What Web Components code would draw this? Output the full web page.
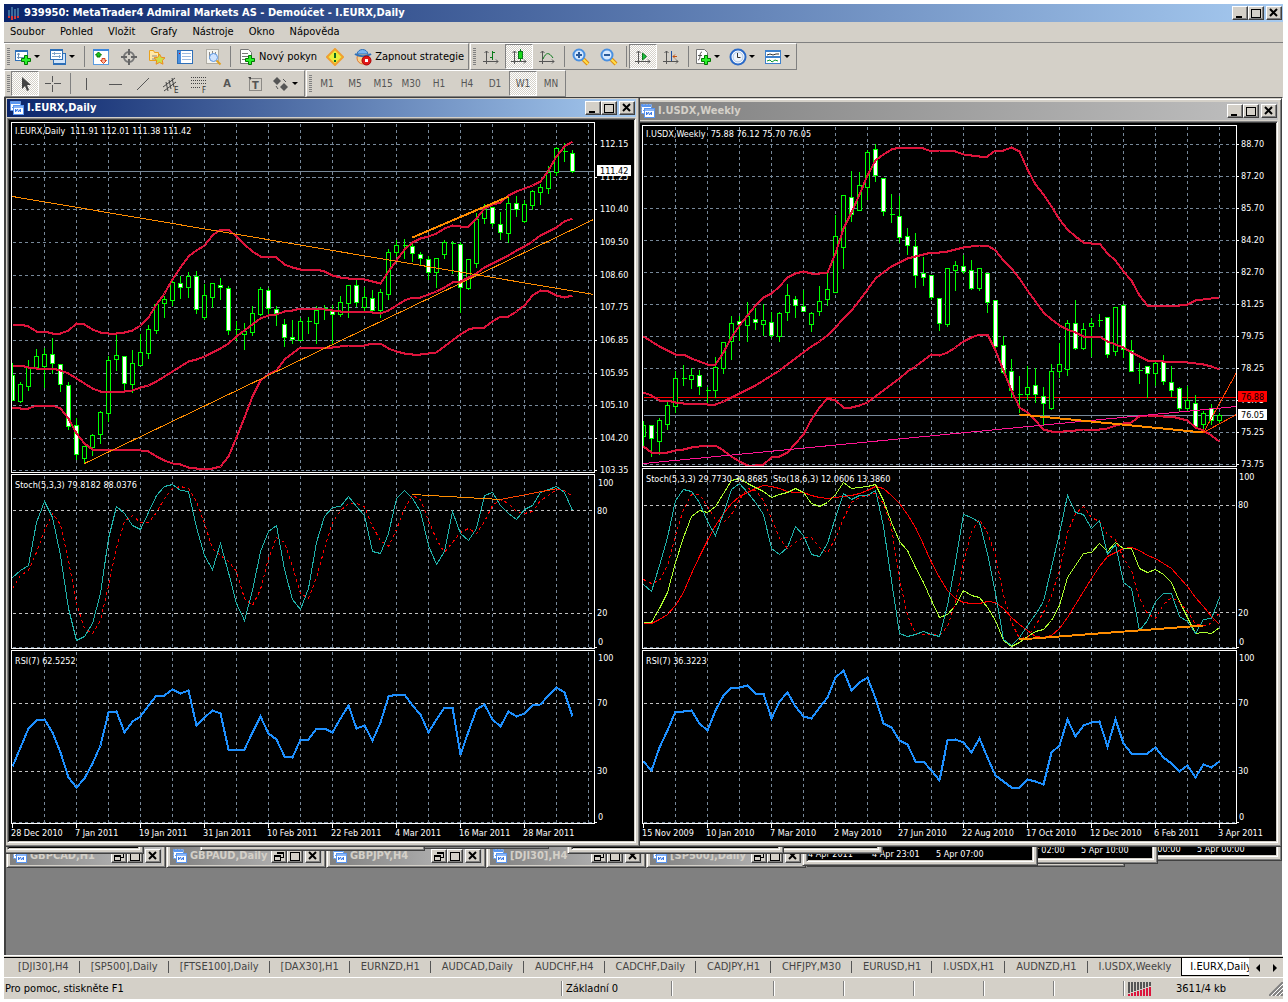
<!DOCTYPE html>
<html lang="cs">
<head>
<meta charset="utf-8">
<title>939950: MetaTrader4 Admiral Markets AS - Demoúčet - I.EURX,Daily</title>
<style>
    :root {
        --face: #d4d0c8;
        --shadow: #808080;
        --dark: #404040;
        --light: #ffffff;
    }

    body {
        margin: 0;
        background: #fff;
        font: 11px/14px "DejaVu Sans Condensed", "DejaVu Sans", sans-serif;
        color: #000;
    }
</style>
</head>
<body>
<terminal-app></terminal-app>

<script>
/* ---------- icons ---------- */

const svg = (body, w = 18, h = 18) =>
    `<svg width="${w}" height="${h}" viewBox="0 0 ${w} ${h}" fill="none" aria-hidden="true">${body}</svg>`;

const plus = (x, y) =>
    `<path d="M${x + 3}.5 ${y}.5h3v3h3v3h-3v3h-3v-3h-3v-3h3z" fill="#2bf02b" stroke="#007a00"/>`;

const axes = '<path d="M4.5 3v13M1 13.5h15M2.5 5l2-2 2 2M14 11.5l2 2-2 2" stroke="#555"/>';

const lens = '<path d="M11 11l5 5" stroke="#e08a10" stroke-width="4"/><path d="M11 11l5 5" stroke="#ffe04a" stroke-width="2"/><circle cx="7" cy="7" r="5.5" fill="#d6e9ff" stroke="#4a90e0" stroke-width="2"/>';

const ICONS = {
    app: svg('<path d="M2 5v6M5 2v9M8 4v7M11 3v8" stroke="#3c6c9c" stroke-width="2"/><path d="M2 11v2M5 11v4M8 11v3M11 11v2" stroke="#d33a3a" stroke-width="2"/>', 14, 16),
    chart: svg('<rect x=".5" y=".5" width="10" height="9" fill="#fff" stroke="#5a96f0" stroke-dasharray="2 1"/><path d="M1 2h9" stroke="#5a96f0" stroke-width="2"/><path d="M2 7l2-2 1 2 2-2" stroke="#5a96f0"/><rect x="3.5" y="4.5" width="10" height="9" fill="#fff" stroke="#5a96f0"/><path d="M4 6h9" stroke="#8ab6f8" stroke-width="2"/><path d="M5.500 8v3l2-3 1 3 2-3v3" stroke="#3a7ae8"/>', 14, 14),
    newChart: svg('<rect x="1.5" y="2.5" width="12" height="10" fill="#fff" stroke="#2e6fb7"/><path d="M1 3h13" stroke="#2e6fb7" stroke-width="2"/><path d="M4.5 5v6M3 9.5h8M3 6.5l1.5-1L6 6.5" stroke="#6f93b8"/>' + plus(7, 7)),
    profiles: svg('<rect x="4.5" y="5.5" width="12" height="10" fill="#d4e6fa" stroke="#2e6fb7"/><path d="M4 16h13" stroke="#2e6fb7" stroke-width="2"/><rect x="1.5" y="1.5" width="12" height="10" fill="#fff" stroke="#2e6fb7"/><path d="M1 2h13" stroke="#2e6fb7" stroke-width="2"/><path d="M3 5.500h9M3 8.500h9M5.500 4v3M10.500 7v3" stroke="#7fa3c8"/>'),
    watch: svg('<rect x="1.5" y="1.5" width="15" height="15" fill="#fff" stroke="#5a9be0"/><path d="M1 2h16" stroke="#3c86dc" stroke-width="2"/><path d="M6.5 4l3 3H8v2H5V7H3.5z" fill="#19c419" stroke="#087808"/><path d="M11.5 15.500l3-3H13v-2h-3v2H8.5z" fill="#ffb39a" stroke="#d8441c"/>'),
    cross: svg('<circle cx="9" cy="9" r="5" stroke="#777" stroke-width="2"/><path d="M9 1v6M9 11v6M1 9h6M11 9h6" stroke="#666" stroke-width="2"/>'),
    favourite: svg('<path d="M1.500 2.500v10h9v-8h-4l-1-2z" fill="#ffe9a8" stroke="#eaa21c"/><path d="M4 8h5M4 11h4" stroke="#888"/><path d="M11.500 6l1.700 3.300 3.800.5-2.700 2.600.7 3.800-3.500-1.800-3.400 1.800.6-3.800L6 9.800l3.800-.5z" fill="#c9e04c" stroke="#f08a1c"/>'),
    list: svg('<rect x="1.5" y="2.5" width="15" height="13" fill="#fff" stroke="#2e6fb7"/><rect x="2" y="3" width="3" height="12" fill="#4b90e0"/><path d="M6 5.5h9M6 8.5h9M6 11.5h9" stroke="#9dbbe0"/><path d="M3 5.5h1" stroke="#d00"/>'),
    tester: svg('<rect x="2.5" y="1.5" width="12" height="14" fill="#f4f4f0" stroke="#b0ada4"/><path d="M5.500 4v7M8.500 3v6M11.500 4v5" stroke="#888"/><circle cx="9.5" cy="9.5" r="4" fill="#cfe3ff" stroke="#5a95e0"/><path d="M12.500 12.500l4 4" stroke="#e0a020" stroke-width="2"/>'),
    order: svg('<path d="M2.500 1.500h8l3 3v11h-11z" fill="#fff" stroke="#777"/><path d="M4 5.500h6M4 8.500h7M4 11.500h5" stroke="#777"/>' + plus(7, 7)),
    warning: svg('<path d="M9 1l8 8-8 8-8-8z" fill="#e9ef3a" stroke="#f0a030" stroke-width="2"/><path d="M9 5v5M9 12v2" stroke="#0a6a20" stroke-width="2"/>'),
    expert: svg('<circle cx="9" cy="10" r="6" fill="#f6d08c" stroke="#e07a30"/><path d="M3 6c1-6 10-6 11 0z" fill="#7ab4f0" stroke="#2e6fb7"/><path d="M1 6c4 3 12 3 16 0" stroke="#2e6fb7" stroke-width="2"/><circle cx="12.500" cy="12.500" r="4.500" fill="#e01818" stroke="#a00"/><rect x="11" y="11" width="3" height="3" fill="#fff"/>'),
    bars: svg(axes + '<path d="M10.500 3v9M8 9.500h2.500M10.500 4.500H13" stroke="#0a7a1a"/>'),
    candles: svg(axes + '<path d="M10.500 1v12" stroke="#0a7a1a"/><rect x="8.500" y="3.500" width="4" height="7" fill="#19d819" stroke="#0a7a1a"/>'),
    line: svg(axes + '<path d="M5 11c3-7 6-7 10-1" stroke="#0a7a1a"/>'),
    zoomIn: svg(lens + '<path d="M4 7h6M7 4v6" stroke="#2a5a9a" stroke-width="2"/>'),
    zoomOut: svg(lens + '<path d="M4 7h6" stroke="#2a5a9a" stroke-width="2"/>'),
    scroll: svg(axes + '<path d="M8.500 5l4 3.500-4 3.500z" fill="#19c040" stroke="#0a7a1a"/>'),
    shift: svg(axes + '<path d="M9.500 3v10" stroke="#2050a0"/><path d="M15 8.500h-4M13 6.500l-2 2 2 2" stroke="#c05010"/>'),
    indicators: svg('<path d="M2.500 1.500h8l3 3v11h-11z" fill="#fff" stroke="#777"/><path d="M8 4c-3 0-1 8-4 8M4 7.500h4" stroke="#555"/>' + plus(7, 7)),
    clock: svg('<circle cx="9" cy="9" r="7.500" fill="#fff" stroke="#2a6ac8" stroke-width="2"/><circle cx="9" cy="9" r="5" fill="#eef4fb" stroke="#a8c4e8"/><path d="M8.500 5v4.500h3" stroke="#333"/>'),
    templates: svg('<rect x="1.5" y="2.5" width="15" height="13" fill="#fff" stroke="#3c80cc"/><path d="M1 3h16M1 9h16" stroke="#3c80cc" stroke-width="2"/><path d="M3 7l3-1 3 1 3-1h3" stroke="#333"/><path d="M3 13l3-1 2 2 3-2 3 1" stroke="#0a9a2a"/>'),
    pointer: svg('<path d="M6 2v12l3-3 2 5 2-1-2-5h4z" fill="#444"/>'),
    crosshair: svg('<path d="M8.500 1v6M8.500 10v7M1 8.500h6M10 8.500h7" stroke="#555"/>'),
    vline: svg('<path d="M8.500 3v12" stroke="#555"/>'),
    hline: svg('<path d="M3 9.500h13" stroke="#555"/>'),
    trend: svg('<path d="M3 15L15 3" stroke="#555"/>'),
    channel: svg('<path d="M1 12L13 3M2 16L14 7M4 7l2 9M7 5l2 9M10 3l2 9" stroke="#444"/><text x="12" y="18" font-size="8" fill="#333">E</text>'),
    fibo: svg('<path d="M1 2.500h15M1 5.500h15M1 8.500h15M1 12.500h9" stroke="#444" stroke-dasharray="1 1"/><text x="12" y="18" font-size="8" fill="#333">F</text>'),
    label: svg('<rect x="3.500" y="3.500" width="12" height="12" stroke="#444" stroke-dasharray="1 1"/><text x="6" y="14" font-size="11" font-weight="bold" fill="#555">T</text><path d="M2 2h3v3z" fill="#444"/>'),
    shapes: svg('<path d="M5 2l4 4-4 4-4-4z" fill="#555"/><path d="M12 8l4 4-4 4-4-4z" fill="#555"/><path d="M4 11l2 3M11 4l3 3" stroke="#555"/>'),
    traffic: svg(Array.from({ length: 8 }, (_, i) =>
        `<path d="M${i * 3 + 1} 0v${11 - i}" stroke="#555" stroke-width="2"/><path d="M${i * 3 + 1} ${12 - i}v${i + 2}" stroke="#dc143c" stroke-width="2"/>`).join(''), 24, 14),
    min: svg('<path d="M3 9h6v2H3z" fill="#000"/>', 14, 12),
    max: svg('<path d="M2.5 2h9v8h-9zM2 2.5h10" stroke="#000" shape-rendering="crispEdges"/>', 14, 12),
    restore: svg('<path d="M5 2h6v5H9M2 5h6v5H2zM5 3h6M2 6h6" stroke="#000" shape-rendering="crispEdges"/>', 14, 12),
    close: svg('<path d="M3 2l7 7M10 2l-7 7" stroke="#000" stroke-width="2"/>', 14, 12),
};

/* ---------- chart data: y values are chart pixels, one entry per bar ---------- */

// high, body top, body bottom, low, and "w" for a falling bar
const EURX = {
    origin: [9, 120], size: [625, 721],
    plot: { left: 11, right: 594, first: 12 },
    panes: [[122, 472], [474, 648], [650, 823]],
    grid: { x: 44, rows: [144, 177, 209, 242, 275, 307, 340, 373, 405, 438, 470, 647, 822] },
    levels: [510, 613, 703, 771],
    labelX: 600,
    prices: ['112.15', '111.25', '110.40', '109.50', '108.60', '107.75', '106.85', '105.95', '105.10', '104.20', '103.35'],
    scales: [['100', 598, 486], ['80', 597, 514], ['20', 597, 616], ['0', 598, 645], ['100', 598, 661], ['70', 597, 706], ['30', 597, 774], ['0', 598, 820]],
    titles: [['I.EURX,Daily  111.91 112.01 111.38 111.42', 134], ['Stoch(5,3,3) 79.8182 88.0376', 488], ['RSI(7) 62.5252', 664]],
    dates: ['28 Dec 2010', '7 Jan 2011', '19 Jan 2011', '31 Jan 2011', '10 Feb 2011', '22 Feb 2011', '4 Mar 2011', '16 Mar 2011', '28 Mar 2011'],
    marks: [[171, '#778899', '#fff', '111.42']],
    candles: '362 375 400 400 w,381 384 401 402,359 367 386 390,348 356 367 367,347 354 366 387,337 354 363 373 w,363 364 384 391 w,381 385 426 429 w,417 425 454 459 w,445 446 458 463,433 435 447 455,410 412 434 443,355 360 413 421,334 355 359 370,355 356 383 390 w,349 363 384 392,333 352 365 365,324 329 353 358,302 304 330 333,295 299 303 317,280 282 300 305,275 283 287 298 w,271 276 287 297,270 276 309 313 w,283 295 317 319,282 283 297 307,277 285 287 299 w,285 288 330 334 w,320 329 330 340,322 331 334 349,305 313 332 335,286 289 314 315,287 290 308 313 w,305 309 313 325 w,318 324 337 346 w,319 337 339 343 w,317 321 340 340,316 321 322 333,305 310 323 343,304 308 309 319,304 311 314 344 w,295 302 314 316,285 285 303 317,279 285 302 306 w,286 297 307 310,289 298 310 310 w,288 292 310 317,248 252 294 299,239 245 252 256,238 245 246 258,241 246 253 261 w,251 254 258 265 w,255 259 272 279 w,258 258 272 287,239 242 254 258,240 243 244 273,241 244 287 312 w,258 259 288 289,212 219 263 267,203 209 218 223,206 207 223 226 w,211 224 232 239 w,197 203 233 242,195 203 209 216 w,199 204 221 222,189 191 205 209,183 187 192 204,165 172 188 193,146 148 172 175,142 151 152 161,149 153 171 172 w',
    lines: [
        ['#dc143c', 2, '324 324 326 331 331 333 333 330 323 324 329 332 333 333 332 330 325 317 304 293 279 267 256 250 245 235 229 229 236 244 251 256 256 257 264 267 269 269 269 271 275 277 278 278 279 281 283 271 260 249 242 238 236 233 228 225 226 226 218 208 204 202 195 191 188 185 181 170 156 146 141'],
        ['#dc143c', 2, '365 365 367 368 368 368 370 373 378 383 388 391 391 391 391 390 387 385 381 376 371 366 361 359 356 352 348 343 336 330 324 318 315 314 311 310 308 308 308 309 310 311 311 311 311 312 313 310 305 300 297 297 294 291 287 282 281 277 273 267 263 259 255 250 246 241 235 231 227 221 218'],
        ['#dc143c', 2, '407 408 408 405 405 405 408 418 433 443 449 449 449 449 449 449 450 451 456 460 463 464 467 468 468 468 466 456 437 417 396 380 374 370 359 353 347 347 347 347 347 346 345 345 345 343 343 348 351 353 354 354 353 352 346 340 334 329 327 327 321 316 316 311 305 295 290 291 295 297 295'],
        ['#ff0000', 1, '588 575 570 552 530 513 524 560 603 628 633 620 585 547 521 515 522 522 512 498 488 486 488 501 523 548 555 561 571 598 605 589 558 537 542 566 593 598 577 548 522 510 503 503 506 526 540 546 529 508 495 499 520 539 552 542 532 528 533 521 505 499 503 511 513 511 500 495 489 490 496', '3 3'],
        ['#20b2aa', 1, '577 570 565 522 501 517 555 608 640 636 623 593 538 506 513 525 529 512 495 486 484 490 491 527 555 569 543 572 603 620 590 551 531 525 569 599 609 588 542 516 507 506 496 506 515 551 553 533 498 490 498 511 545 564 551 511 533 540 528 495 492 505 513 519 509 505 492 489 486 492 510'],
        ['#1e90ff', 2, '766 747 728 720 719 732 752 777 787 778 763 745 712 711 732 721 716 705 695 695 689 693 690 725 717 710 713 749 749 749 732 716 733 739 756 757 739 739 728 728 732 718 705 728 725 740 722 696 694 694 705 714 732 719 707 707 754 731 709 704 719 726 711 716 713 705 704 695 687 692 716'],
    ],
    trends: [
        ['#ff8c00', 1, 'M12 196L593 294'],
        ['#ff8c00', 1, 'M84 463L593 219'],
        ['#ff8c00', 2, 'M412 237L508 196'],
        ['#ff8c00', 1, 'M412 494L500 499'],
        ['#ff4500', 1, 'M500 499L557 488'],
    ],
};

const USDX = {
    origin: [640, 123], size: [636, 718],
    plot: { left: 642, right: 1236, first: 643 },
    panes: [[125, 466], [468, 648], [650, 823]],
    grid: { x: 675, rows: [144, 176, 208, 240, 272, 304, 336, 368, 400, 432, 464, 647, 822] },
    levels: [505, 612, 703, 771],
    labelX: 1241,
    prices: ['88.70', '87.20', '85.70', '84.20', '82.70', '81.25', '79.75', '78.25', '76.75', '75.25', '73.75'],
    scales: [['100', 1239, 480], ['80', 1238, 508], ['20', 1238, 616], ['0', 1239, 645], ['100', 1239, 661], ['70', 1238, 706], ['30', 1238, 774], ['0', 1239, 820]],
    titles: [['I.USDX,Weekly  75.88 76.12 75.70 76.05', 137], ['Stoch(5,3,3) 29.7730 30.8685  Sto(18,6,3) 12.0606 13.3860', 482], ['RSI(7) 36.3223', 664]],
    dates: ['15 Nov 2009', '10 Jan 2010', '7 Mar 2010', '2 May 2010', '27 Jun 2010', '22 Aug 2010', '17 Oct 2010', '12 Dec 2010', '6 Feb 2011', '3 Apr 2011'],
    marks: [[397, '#ff0000', '#ff0000', '76.88'], [415, '#778899', '#fff', '76.05']],
    candles: '420 425 436 445,425 425 438 456 w,417 420 441 454,401 405 424 429,370 378 406 412,364 378 378 385,367 375 379 388,369 375 386 394 w,386 390 390 403,356 367 390 397,341 342 368 373,315 323 341 359,315 321 324 340 w,301 316 325 341,307 319 322 329 w,303 320 324 335,311 322 335 337 w,311 313 336 341,283 295 312 320,295 299 305 317 w,289 306 311 311 w,311 313 324 331,285 301 311 315,271 289 299 305,214 236 292 292,195 195 247 268,170 197 214 221 w,171 185 210 210,149 152 187 199,143 149 175 181 w,178 178 211 215 w,193 214 215 222,195 216 237 242 w,227 236 245 254 w,232 246 275 287 w,256 273 277 285 w,275 275 297 299 w,297 298 323 330 w,267 268 324 326,260 265 270 290,254 266 271 273 w,259 270 288 289 w,267 268 288 290,272 273 302 312 w,299 300 346 348 w,335 345 372 373 w,358 371 390 397 w,375 394 395 412,365 387 394 399,367 385 394 402 w,386 396 403 425 w,363 371 408 409,342 364 371 377,319 323 369 375,299 323 348 349 w,322 329 348 349,317 323 326 356,313 320 321 326,316 317 354 357 w,306 307 351 355,303 305 349 357 w,339 350 371 371 w,362 370 371 383,365 366 373 397 w,360 363 373 385,354 361 381 384 w,365 382 390 396 w,386 388 408 410 w,385 400 408 410,394 403 426 426 w,410 413 424 429,403 408 420 424 w,412 415 420 423',
    lines: [
        ['#dc143c', 2, '336 341 346 350 354 354 358 361 364 364 352 337 325 315 305 297 293 286 277 273 271 273 273 272 253 228 212 194 175 160 154 149 147 147 147 148 151 150 150 151 154 155 156 156 150 150 147 151 169 184 194 206 219 229 236 242 243 243 253 260 271 280 295 305 305 305 305 305 304 300 299 298 297'],
        ['#dc143c', 2, '392 395 400 400 402 403 403 403 404 404 401 397 393 389 385 380 375 370 364 358 352 346 341 335 327 318 310 300 289 278 272 266 262 258 256 254 252 252 251 249 247 246 245 245 250 260 268 278 290 301 312 319 325 329 332 336 336 336 341 344 347 352 356 360 360 361 361 361 362 363 364 366 369'],
        ['#dc143c', 2, '446 452 452 452 450 449 447 446 445 445 450 456 461 465 465 464 457 456 452 443 434 419 407 398 400 407 407 405 402 396 390 384 378 371 366 360 354 355 352 347 341 337 334 334 350 370 390 407 412 420 429 431 432 430 430 429 429 429 428 425 423 422 416 415 415 416 416 418 420 427 430 435 441'],
        ['#ff0000', 1, '623 623 619 614 605 592 573 556 540 525 513 503 496 492 488 485 486 488 491 492 492 495 497 498 497 496 495 493 490 486 488 495 503 514 527 544 562 577 590 598 602 603 603 601 602 608 617 624 630 636 637 635 628 617 604 591 578 566 556 552 548 547 550 555 558 563 568 577 586 597 606 616 624'],
        ['#adff2f', 1, '622 622 608 592 562 537 516 510 512 506 493 480 478 483 487 491 497 494 492 488 492 503 506 502 494 482 488 487 486 484 500 522 541 550 567 582 600 617 614 605 590 595 597 607 620 640 646 642 636 631 629 620 605 577 565 553 552 543 551 542 548 548 568 572 569 574 582 601 617 633 632 633 627'],
        ['#ff0000', 1, '579 583 580 565 535 509 494 494 506 519 522 514 499 488 490 500 518 538 548 542 537 537 547 552 538 518 502 497 495 493 503 527 578 615 633 634 634 635 626 602 562 531 519 532 555 595 622 638 637 625 612 595 570 532 513 506 517 521 534 539 558 570 598 613 618 604 597 602 611 624 625 623 612', '3 3'],
        ['#20b2aa', 1, '584 591 565 537 500 489 491 502 521 535 513 489 483 492 502 514 548 554 547 526 535 554 556 543 517 493 499 495 495 490 526 580 633 636 634 631 634 636 605 562 514 517 522 553 593 639 645 637 625 614 601 567 533 495 512 514 528 520 554 544 582 588 630 620 601 593 593 616 621 633 619 618 597'],
        ['#1e90ff', 2, '761 770 747 730 711 711 710 723 730 710 695 687 687 685 693 693 718 701 692 706 716 718 707 697 677 670 690 682 677 698 723 727 740 744 761 761 770 780 740 739 742 752 738 757 775 781 787 787 779 781 784 752 745 719 736 725 722 721 746 719 743 753 753 753 747 757 763 771 765 777 764 767 761'],
    ],
    trends: [
        ['#ff1493', 1, 'M643 463L1236 406'],
        ['#ff8c00', 2, 'M1019 414L1203 432'],
        ['#ff4500', 1, 'M1203 432L1236 372'],
        ['#ff4500', 1, 'M1203 432L1236 414'],
        ['#ff8c00', 2, 'M1019 639L1203 625'],
    ],
};

const CHARTS = { EURX, USDX };

/* ---------- base class ---------- */

class TerminalElement extends HTMLElement {
    connectedCallback() {
        if (this.shadowRoot) return;
        this.attachShadow({ mode: 'open' });
        this.shadowRoot.innerHTML = `<style>
            * { box-sizing: border-box; }
            button { font: inherit; color: inherit; margin: 0; padding: 0; border: 0; background: none; }
            svg { display: block; flex: none; }
        </style>` + this.render();
    }
}

/* ---------- window buttons ---------- */

class WindowButtons extends TerminalElement {
    render() {
        const middle = this.getAttribute('kind') || 'min max';
        const names = { min: 'Minimalizovat', max: 'Maximalizovat', restore: 'Obnovit', close: 'Zavřít' };
        const button = name => `<button class="${name}" aria-label="${names[name]}">${ICONS[name]}</button>`;
        return `
            <style>
                :host { display: flex; flex: none; }
                button {
                    width: 16px;
                    height: 14px;
                    background: var(--face);
                    border: 1px solid;
                    border-color: var(--light) var(--dark) var(--dark) var(--light);
                    box-shadow: inset -1px -1px var(--shadow);
                }
                .close { margin-left: 2px; }
            </style>
            ${middle.split(' ').map(button).join('')}${button('close')}`;
    }
}

/* ---------- application title and menu ---------- */

class TitleBar extends TerminalElement {
    render() {
        return `
            <style>
                :host {
                    display: flex;
                    align-items: center;
                    height: 18px;
                    padding: 0 1px 0 3px;
                    gap: 3px;
                    background: linear-gradient(90deg, #0a246a, #a6caf0);
                    color: #fff;
                    font-weight: bold;
                }
                span { flex: 1; white-space: nowrap; overflow: hidden; }
            </style>
            ${ICONS.app}
            <span><slot></slot></span>
            <window-buttons></window-buttons>`;
    }
}

class MenuBar extends TerminalElement {
    render() {
        const items = ['Soubor', 'Pohled', 'Vložit', 'Grafy', 'Nástroje', 'Okno', 'Nápověda'];
        return `
            <style>
                :host { display: block; border-bottom: 1px solid var(--shadow); }
                nav { display: flex; gap: 15px; height: 20px; padding: 0 6px; align-items: center; }
            </style>
            <nav>${items.map(item => `<button>${item}</button>`).join('')}</nav>`;
    }
}

/* ---------- toolbars ---------- */

class ToolBar extends TerminalElement {
    render() {
        return `
            <style>
                :host {
                    display: flex;
                    height: 27px;
                    padding-left: 6px;
                    border: 1px solid;
                    border-color: var(--light) var(--shadow) var(--shadow) var(--light);
                }
                .grip {
                    width: 3px;
                    margin: 4px 0 3px -4px;
                    background: repeating-linear-gradient(var(--shadow) 0 1px, transparent 1px 2px);
                }
                .items { display: flex; margin-left: 1px; }
            </style>
            <div class="grip"></div>
            <div class="items"><slot></slot></div>`;
    }
}

class ToolButton extends TerminalElement {
    render() {
        const icon = this.getAttribute('icon');
        const drop = this.hasAttribute('drop');
        return `
            <style>
                :host { display: block; flex: none; }
                button {
                    display: flex;
                    align-items: center;
                    justify-content: center;
                    min-width: 28px;
                    height: 25px;
                    white-space: nowrap;
                }
                :host([drop]) button { width: 35px; justify-content: flex-start; padding-left: 3px; gap: 2px; }
                :host([wide]) button { gap: 3px; padding: 0 4px 0 5px; }
                :host([period]) button { color: #555; font-size: 10px; }
                :host([letter]) button { color: #555; font-weight: bold; }
                :host([pressed]) button {
                    border: 1px solid;
                    border-color: var(--shadow) var(--light) var(--light) var(--shadow);
                    background: conic-gradient(#fff 25%, var(--face) 0 50%, #fff 0 75%, var(--face) 0) 0 0 / 2px 2px;
                }
                i { border: solid transparent; border-width: 3px 3px 0; border-top-color: #000; }
            </style>
            <button ${icon ? `aria-label="${icon}"` : ''}>
                ${icon ? ICONS[icon] : ''}<slot></slot>${drop ? '<i></i>' : ''}
            </button>`;
    }
}

class ToolSeparator extends TerminalElement {
    render() {
        return `
            <style>
                :host { display: block; width: 1px; margin: 2px 2px 2px 3px; background: var(--shadow); }
            </style>`;
    }
}

/* ---------- MDI windows ---------- */

class ChartWindow extends TerminalElement {
    render() {
        const caption = this.getAttribute('caption') || '';
        return `
            <style>
                :host {
                    position: absolute;
                    display: flex;
                    flex-direction: column;
                    box-sizing: border-box;
                    padding: 3px;
                    background: var(--face);
                    border: 1px solid;
                    border-color: var(--face) var(--dark) var(--dark) var(--face);
                    box-shadow: inset 1px 1px var(--light), inset -1px -1px var(--shadow);
                }
                header {
                    display: flex;
                    align-items: center;
                    flex: none;
                    height: 18px;
                    gap: 3px;
                    padding: 0 1px 0 3px;
                    margin-bottom: 1px;
                    background: linear-gradient(90deg, #808080, #c0c0c0);
                    color: var(--face);
                    font-weight: bold;
                    white-space: nowrap;
                }
                :host([active]) header {
                    background: linear-gradient(90deg, #0a246a, #a6caf0);
                    color: #fff;
                }
                header span { flex: 1; overflow: hidden; }
                .client {
                    flex: 1;
                    min-height: 0;
                    overflow: hidden;
                    display: flex;
                    flex-direction: column;
                    justify-content: flex-end;
                    background: #000;
                    color: #fff;
                    font-size: 9px;
                    line-height: 12px;
                    border: 1px solid;
                    border-color: var(--shadow) var(--light) var(--light) var(--shadow);
                    box-shadow: inset 1px 1px var(--dark), inset -1px -1px var(--face);
                    padding: 1px;
                }
                :host([minimized]) .client { display: none; }
            </style>
            <header>
                ${ICONS.chart}<span>${caption}</span>
                <window-buttons kind="${this.hasAttribute('minimized') ? 'restore max' : 'min max'}"></window-buttons>
            </header>
            <div class="client"><slot></slot></div>`;
    }
}

class TimeStrip extends TerminalElement {
    render() {
        const labels = this.getAttribute('labels').split(',');
        return `
            <style>
                :host { display: flex; justify-content: flex-start; white-space: nowrap; }
                span { flex: none; width: 64px; }
            </style>
            ${labels.map(label => `<span>${label}</span>`).join('')}`;
    }
}

class PriceChart extends TerminalElement {
    render() {
        const chart = CHARTS[this.getAttribute('symbol')];
        const [w, h] = chart.size;
        return `
            <style>
                :host { display: block; }
                text { fill: #fff; font-size: 9px; white-space: pre; }
                .art { shape-rendering: crispEdges; fill: none; }
            </style>
            <svg width="${w}" height="${h}" viewBox="${chart.origin.join(' ')} ${w} ${h}">
                <g class="art" transform="translate(.5 .5)">
                    ${this.grid(chart)}
                    ${this.candles(chart)}
                    ${chart.lines.map(line => this.line(chart, line)).join('')}
                    ${chart.trends.map(([color, width, d]) => `<path d="${d}" stroke="${color}" stroke-width="${width}"/>`).join('')}
                    ${this.frame(chart)}
                </g>
                ${this.labels(chart)}
            </svg>`;
    }

    grid({ grid, plot, panes, levels, marks }) {
        const row = y => `M${plot.left + 1} ${y}H${plot.right}`;
        let columns = '';
        for (let x = grid.x; x < plot.right; x += 32) {
            columns += panes.map(([top, bottom]) => `M${x} ${top + 1}V${bottom}`).join('');
        }
        return `
            <path d="${grid.rows.map(row).join('')}${columns}" stroke="#778899" stroke-dasharray="3 3"/>
            <path d="${levels.map(row).join('')}" stroke="#c0c0c0" stroke-dasharray="3 3"/>
            ${marks.map(([y, color]) => `<path d="${row(y)}" stroke="${color}"/>`).join('')}`;
    }

    candles({ candles, plot }) {
        return candles.split(',').map((bar, i) => {
            const [high, top, bottom, low, falling] = bar.split(' ');
            const x = plot.first + i * 8;
            const left = Math.max(x - 2, plot.left + 1);
            const body = bottom - top > 1
                ? `<rect x="${left}" y="${top}" width="${x + 2 - left}" height="${bottom - top}" fill="${falling ? '#fff' : '#000'}"/>`
                : `<path d="M${left} ${top}h${x + 3 - left}"/>`;
            return `<g stroke="#00ff00"><path d="M${x} ${high}V${low}"/>${body}</g>`;
        }).join('');
    }

    line({ plot }, [color, width, values, dash]) {
        const points = values.split(' ').map((y, i) => `${plot.first + i * 8},${y}`).join(' ');
        return `<polyline points="${points}" stroke="${color}" stroke-width="${width}" ${dash ? `stroke-dasharray="${dash}"` : ''}/>`;
    }

    frame({ plot, panes, grid, dates }) {
        const boxes = panes.map(([top, bottom]) => `M${plot.left} ${top}H${plot.right}V${bottom}H${plot.left}z`).join('');
        const ticks = grid.rows.map(y => `M${plot.right} ${y}h2`).join('');
        const dateTicks = dates.map((_, i) => `M${plot.first + i * 64} 823v4`).join('');
        return `<path d="${boxes}${ticks}${dateTicks}" stroke="#fff"/>`;
    }

    labels({ labelX, prices, grid, scales, titles, dates, marks, plot }) {
        const text = (x, y, value, fill = '#fff') => `<text x="${x}" y="${y}" style="fill:${fill}">${value}</text>`;
        return prices.map((price, i) => text(labelX, grid.rows[i] + 3, price)).join('')
            + scales.map(([value, x, y]) => text(x, y, value)).join('')
            + titles.map(([value, y]) => text(plot.left + 4, y, value)).join('')
            + dates.map((date, i) => text(plot.first - 1 + i * 64, 836, date)).join('')
            + marks.map(([y, , fill, value]) =>
                `<rect x="${labelX - 3}" y="${y - 6}" width="${value.length > 5 ? 34 : 29}" height="11" fill="${fill}"/>`
                + text(labelX, y + 3, value, '#000')).join('');
    }
}

/* ---------- bottom bars ---------- */

class ChartTabs extends TerminalElement {
    render() {
        const tabs = ['[DJI30],H4', '[SP500],Daily', '[FTSE100],Daily', '[DAX30],H1', 'EURNZD,H1', 'AUDCAD,Daily', 'AUDCHF,H4',
            'CADCHF,Daily', 'CADJPY,H1', 'CHFJPY,M30', 'EURUSD,H1', 'I.USDX,H1', 'AUDNZD,H1', 'I.USDX,Weekly'];
        return `
            <style>
                :host { display: block; border-top: 1px solid var(--light); padding-top: 1px; }
                nav { display: flex; height: 20px; border-top: 1px solid #000; padding-left: 3px; color: #444; }
                .tabs { display: flex; flex: 1; min-width: 0; overflow: hidden; }
                .tab { flex: none; height: 12px; line-height: 12px; margin-top: 3px; padding: 0 10px 0 11px; border-right: 1px solid #555; }
                .tab:nth-last-child(2) { border: 0; }
                .active {
                    height: 18px;
                    padding: 0 0 0 8px;
                    flex: 1 0 0;
                    min-width: 0;
                    text-align: left;
                    overflow: hidden;
                    white-space: nowrap;
                    background: #fff;
                    color: #000;
                    border: solid #000;
                    border-width: 0 0 1px 1px;
                }
                .arrow { width: 17px; display: flex; align-items: center; justify-content: center; }
            </style>
            <nav>
                <div class="tabs">
                    ${tabs.map(tab => `<button class="tab">${tab}</button>`).join('')}
                    <button class="active">I.EURX,Daily</button>
                </div>
                <button class="arrow" aria-label="Předchozí">${svg('<path d="M4 0v8L0 4z" fill="#000"/>', 4, 8)}</button>
                <button class="arrow" aria-label="Další">${svg('<path d="M0 0v8l4-4z" fill="#000"/>', 4, 8)}</button>
            </nav>`;
    }
}

class StatusBar extends TerminalElement {
    render() {
        return `
            <style>
                :host { display: flex; height: 22px; padding: 3px 0 3px 1px; border-top: 1px solid var(--light); align-items: stretch; }
                div { display: flex; align-items: center; padding-left: 4px; border-left: 1px solid var(--shadow); box-shadow: inset 1px 0 var(--light); white-space: nowrap; }
                .help { flex: 1; border: 0; box-shadow: none; padding: 0; }
                .profile { width: 110px; }
                .time { width: 102px; }
                .price { width: 70px; }
                .traffic { width: 160px; gap: 24px; }
                .size { margin-left: auto; align-self: flex-end; }
            </style>
            <div class="help">Pro pomoc, stiskněte F1</div>
            <div class="profile">Základní 0</div>
            <div class="time"></div>
            <div class="price"></div>
            <div class="price"></div>
            <div class="price"></div>
            <div class="price"></div>
            <div class="price"></div>
            <div class="traffic">${ICONS.traffic}<span>3611/4 kb</span>
                <span class="size">${svg('<path d="M0 14L14 0M4 14L14 4M8 14l6-6M12 14l2-2" stroke="#808080" stroke-width="2"/><path d="M2 14L14 2M6 14l8-8M10 14l4-4" stroke="#fff"/>', 14, 14)}</span>
            </div>`;
    }
}

/* ---------- application ---------- */

class TerminalApp extends TerminalElement {
    render() {
        const button = icon => `<tool-button icon="${icon}"></tool-button>`;
        const drop = icon => `<tool-button icon="${icon}" drop></tool-button>`;
        const pressed = icon => `<tool-button icon="${icon}" pressed></tool-button>`;
        const sep = '<tool-separator></tool-separator>';
        const periods = ['M1', 'M5', 'M15', 'M30', 'H1', 'H4', 'D1', 'W1', 'MN'];
        const minimized = ['GBPCAD,H1', 'GBPAUD,Daily', 'GBPJPY,H4', '[DJI30],H4', '[SP500],Daily'];
        return `
            <style>
                :host { display: flex; flex-direction: column; height: 100vh; padding: 4px 5px 3px 4px; box-sizing: border-box; }
                .app { display: flex; flex-direction: column; flex: 1; min-height: 0; background: var(--face); }
                .row { display: flex; }
                .row tool-bar + tool-bar { margin-left: 1px; }
                main {
                    position: relative;
                    flex: 1;
                    min-height: 0;
                    overflow: hidden;
                    background: #808080;
                    border: solid;
                    border-width: 1px 1px 0 2px;
                    border-color: var(--dark) var(--light) var(--light) var(--dark);
                }
                .eurx { left: -3px; top: -3px; width: 637px; height: 752px; }
                .usdx { left: 628px; top: 0; width: 648px; height: 749px; }
                .mini { top: 745px; width: 160px; height: 25px; }
                .back { top: 600px; }
            </style>
            <div class="app">
                <title-bar>939950: MetaTrader4 Admiral Markets AS - Demoúčet - I.EURX,Daily</title-bar>
                <menu-bar></menu-bar>
                <div class="row">
                    <tool-bar>
                        ${drop('newChart')}${drop('profiles')}${sep}
                        ${['watch', 'cross', 'favourite', 'list', 'tester'].map(button).join('')}${sep}
                        <tool-button icon="order" wide>Nový pokyn</tool-button>
                        ${button('warning')}
                        <tool-button icon="expert" wide>Zapnout strategie</tool-button>
                    </tool-bar>
                    <tool-bar>
                        ${button('bars')}${pressed('candles')}${button('line')}${sep}
                        ${button('zoomIn')}${button('zoomOut')}${sep}
                        ${pressed('scroll')}${button('shift')}${sep}
                        ${drop('indicators')}${drop('clock')}${drop('templates')}
                    </tool-bar>
                </div>
                <div class="row">
                    <tool-bar>
                        ${pressed('pointer')}${button('crosshair')}${sep}
                        ${['vline', 'hline', 'trend', 'channel', 'fibo'].map(button).join('')}
                        <tool-button letter>A</tool-button>
                        ${button('label')}${drop('shapes')}
                    </tool-bar>
                    <tool-bar>
                        ${periods.map(p => `<tool-button period ${p === 'W1' ? 'pressed' : ''}>${p}</tool-button>`).join('')}
                    </tool-bar>
                </div>
                <main>
                    <chart-window class="back" style="left: 800px; width: 319px; height: 169px"></chart-window>
                    <chart-window class="back" style="left: 1055px; width: 221px; height: 163px">
                        <time-strip style="padding-left: 66px" labels="5 Apr 00:00,5 Apr 00:00"></time-strip>
                    </chart-window>
                    <chart-window class="back" style="left: 999px; width: 153px; height: 166px">
                        <time-strip style="padding: 0 0 2px 6px" labels="5 Apr 02:00,5 Apr 10:00"></time-strip>
                    </chart-window>
                    ${minimized.map((caption, i) => `<chart-window class="mini" minimized caption="${caption}" style="left: ${i * 160}px"></chart-window>`).join('')}
                    <chart-window class="back" style="left: 796px; width: 236px; height: 168px">
                        <time-strip labels="4 Apr 2011,4 Apr 23:01,5 Apr 07:00"></time-strip>
                    </chart-window>
                    <chart-window class="back" style="left: 400px; width: 143px; height: 151px"></chart-window>
                    <chart-window class="back" style="left: 194px; width: 225px; height: 153px"></chart-window>
                    <chart-window class="back" style="left: -3px; width: 141px; height: 156px"></chart-window>
                    <chart-window class="back" style="left: 700px; width: 177px; height: 156px"></chart-window>
                    <chart-window class="back" style="left: 561px; width: 217px; height: 156px"></chart-window>
                    <chart-window class="usdx" caption="I.USDX,Weekly"><price-chart symbol="USDX"></price-chart></chart-window>
                    <chart-window class="eurx" active caption="I.EURX,Daily"><price-chart symbol="EURX"></price-chart></chart-window>
                </main>
                <chart-tabs></chart-tabs>
                <status-bar></status-bar>
            </div>`;
    }
}

customElements.define('window-buttons', WindowButtons);
customElements.define('title-bar', TitleBar);
customElements.define('menu-bar', MenuBar);
customElements.define('tool-bar', ToolBar);
customElements.define('tool-button', ToolButton);
customElements.define('tool-separator', ToolSeparator);
customElements.define('time-strip', TimeStrip);
customElements.define('price-chart', PriceChart);
customElements.define('chart-window', ChartWindow);
customElements.define('chart-tabs', ChartTabs);
customElements.define('status-bar', StatusBar);
customElements.define('terminal-app', TerminalApp);
</script>
</body>
</html>
